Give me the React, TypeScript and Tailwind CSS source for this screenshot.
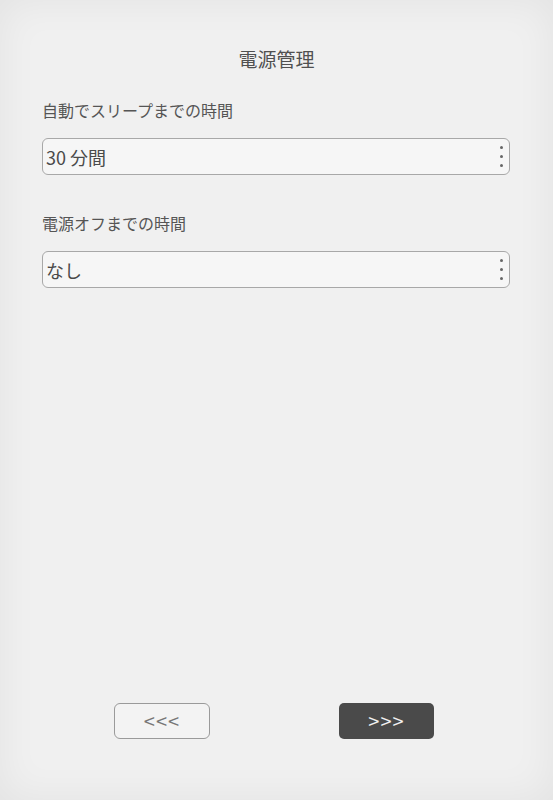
import React from 'react'

const font = { fontFamily: '"Noto Sans CJK JP", "Noto Sans", sans-serif' }

const Dots: React.FC = () => (
  <div className="flex flex-col gap-[6px] mr-[6px]">
    <span className="block w-[3px] h-[3px] rounded-full bg-[#666]" />
    <span className="block w-[3px] h-[3px] rounded-full bg-[#666]" />
    <span className="block w-[3px] h-[3px] rounded-full bg-[#666]" />
  </div>
)

const SelectBox: React.FC<{ value: string }> = ({ value }) => (
  <div className="mt-[17px] h-[37px] w-[468px] flex items-center justify-between border border-[#a8a8a8] rounded-[6px] bg-[#f6f6f6] pl-[3px]">
    <span className="text-[18px] text-[#4a4a4a] leading-none">{value}</span>
    <Dots />
  </div>
)

export default function App() {
  return (
    <div
      style={font}
      className="w-[553px] h-[800px] bg-[#f0f0f0] flex flex-col shadow-[inset_0_0_40px_rgba(0,0,0,0.06)]"
    >
      <h1 className="pt-[47px] text-center text-[19px] leading-[24px] text-[#505050] font-normal">
        電源管理
      </h1>

      <div className="px-[42px] flex flex-col">
        <p className="mt-[28px] text-[16px] leading-[22px] text-[#555]">自動でスリープまでの時間</p>
        <SelectBox value="30 分間" />

        <p className="mt-[37px] text-[16px] leading-[22px] text-[#555]">電源オフまでの時間</p>
        <SelectBox value="なし" />
      </div>

      <div className="flex-1" />

      <div className="flex pl-[114px] gap-[129px] mb-[61px]">
        <button className="w-[96px] h-[36px] rounded-[6px] border border-[#9a9a9a] bg-[#f3f3f3] text-[#777] text-[20px] leading-none tracking-[1px]">
          &lt;&lt;&lt;
        </button>
        <button className="w-[95px] h-[36px] rounded-[5px] bg-[#4a4a4a] text-[#f0f0f0] text-[20px] leading-none tracking-[1px]">
          &gt;&gt;&gt;
        </button>
      </div>
    </div>
  )
}
